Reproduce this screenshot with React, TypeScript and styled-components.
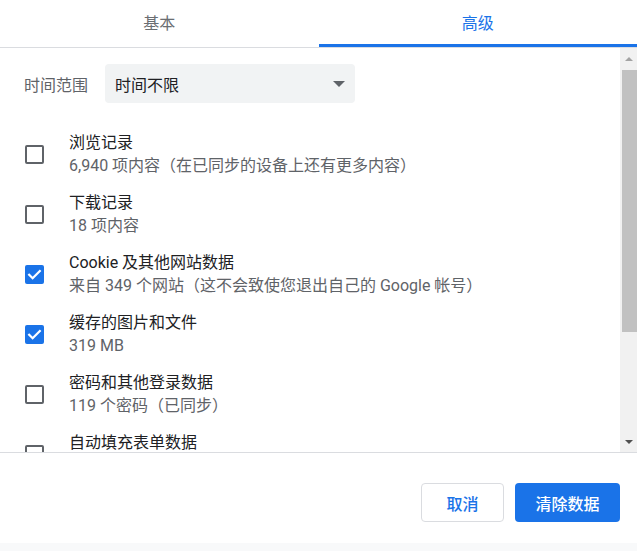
import React from 'react';
import styled, { createGlobalStyle } from 'styled-components';

const GlobalStyle = createGlobalStyle`
  * {
    box-sizing: border-box;
  }

  body {
    margin: 0;
    background: #ffffff;
    font-family: Roboto, 'Noto Sans CJK SC', sans-serif;
  }
`;

type Item = {
  title: string;
  detail: string;
  checked: boolean;
};

const items: Item[] = [
  { title: '浏览记录', detail: '6,940 项内容（在已同步的设备上还有更多内容）', checked: false },
  { title: '下载记录', detail: '18 项内容', checked: false },
  { title: 'Cookie 及其他网站数据', detail: '来自 349 个网站（这不会致使您退出自己的 Google 帐号）', checked: true },
  { title: '缓存的图片和文件', detail: '319 MB', checked: true },
  { title: '密码和其他登录数据', detail: '119 个密码（已同步）', checked: false },
  { title: '自动填充表单数据', detail: '', checked: false },
];

const App = () => {
  return (
    <Root>
      <GlobalStyle />
      <TabBar>
        <Tab>基本</Tab>
        <Tab active>高级</Tab>
      </TabBar>
      <Body>
        <Content>
          <RangeRow>
            <RangeLabel>时间范围</RangeLabel>
            <Select>
              <span>时间不限</span>
              <SelectArrow />
            </Select>
          </RangeRow>
          <List>
            {items.map((item) => (
              <Row key={item.title}>
                <Checkbox checked={item.checked}>
                  {item.checked && (
                    <svg width="15" height="15" viewBox="0 0 24 24">
                      <path d="M3.5 12.5l5.5 5.5L20.5 6.5" fill="none" stroke="#ffffff" strokeWidth="3.6" strokeLinecap="square" />
                    </svg>
                  )}
                </Checkbox>
                <RowText>
                  <RowTitle>{item.title}</RowTitle>
                  <RowDetail>{item.detail}</RowDetail>
                </RowText>
              </Row>
            ))}
          </List>
        </Content>
        <ScrollTrack>
          <ScrollButton>
            <ArrowUp />
          </ScrollButton>
          <Thumb />
          <ScrollGap />
          <ScrollButton>
            <ArrowDown />
          </ScrollButton>
        </ScrollTrack>
      </Body>
      <Footer>
        <CancelButton>取消</CancelButton>
        <ClearButton>清除数据</ClearButton>
      </Footer>
      <BottomStrip />
    </Root>
  );
};

const Root = styled.div`
  width: 637px;
  height: 551px;

  display: flex;
  flex-direction: column;

  background: #ffffff;
  overflow: hidden;
`;

const TabBar = styled.div`
  height: 48px;

  display: flex;

  border-bottom: 1px solid #dadce0;
`;

const Tab = styled.div<{ active?: boolean }>`
  flex: 1;
  height: 47px;

  display: flex;
  align-items: center;
  justify-content: center;

  font-size: 16px;
  color: ${({ active }) => (active ? '#1a73e8' : '#6b6e72')};
  border-bottom: 3px solid ${({ active }) => (active ? '#1a73e8' : 'transparent')};
`;

const Body = styled.div`
  height: 405px;

  display: flex;

  border-bottom: 1px solid #dadce0;
`;

const Content = styled.div`
  flex: 1;
  min-width: 0;

  padding: 16px 0 0 24px;
  overflow: hidden;
`;

const RangeRow = styled.div`
  display: flex;
  align-items: center;
  gap: 17px;
`;

const RangeLabel = styled.span`
  width: 64px;

  font-size: 16px;
  color: #5f6368;
`;

const Select = styled.div`
  width: 250px;
  height: 39px;

  display: flex;
  align-items: center;
  justify-content: space-between;

  padding: 0 10px;
  border-radius: 4px;
  background: #f1f3f4;

  font-size: 16px;
  color: #202124;
`;

const SelectArrow = styled.span`
  width: 0;
  height: 0;

  border-left: 6px solid transparent;
  border-right: 6px solid transparent;
  border-top: 6px solid #5f6368;
`;

const List = styled.div`
  display: flex;
  flex-direction: column;

  margin-top: 21px;
`;

const Row = styled.div`
  height: 60px;
  flex-shrink: 0;

  display: flex;
  align-items: center;
  gap: 25px;

  padding-left: 1px;
`;

const Checkbox = styled.span<{ checked: boolean }>`
  width: 19px;
  height: 19px;
  flex-shrink: 0;

  display: flex;
  align-items: center;
  justify-content: center;

  border-radius: 2px;
  border: ${({ checked }) => (checked ? 'none' : '2px solid #5f6368')};
  background: ${({ checked }) => (checked ? '#1a73e8' : 'transparent')};
`;

const RowText = styled.div`
  display: flex;
  flex-direction: column;
`;

const RowTitle = styled.div`
  font-size: 16px;
  line-height: 23px;
  color: #202124;
  white-space: nowrap;
`;

const RowDetail = styled.div`
  min-height: 23px;

  font-size: 16px;
  line-height: 23px;
  color: #5f6368;
  white-space: nowrap;
`;

const ScrollTrack = styled.div`
  width: 17px;

  display: flex;
  flex-direction: column;

  background: #f1f1f1;
`;

const ScrollButton = styled.div`
  height: 21px;

  display: flex;
  align-items: center;
  justify-content: center;
`;

const ArrowUp = styled.span`
  width: 0;
  height: 0;

  border-left: 4px solid transparent;
  border-right: 4px solid transparent;
  border-bottom: 4px solid #a3a3a3;
`;

const ArrowDown = styled.span`
  width: 0;
  height: 0;

  border-left: 4px solid transparent;
  border-right: 4px solid transparent;
  border-top: 4px solid #505050;
`;

const Thumb = styled.div`
  height: 262px;

  margin: 1px 0 0 2px;
  background: #c1c1c1;
`;

const ScrollGap = styled.div`
  flex: 1;
`;

const Footer = styled.div`
  height: 90px;

  display: flex;
  justify-content: flex-end;
  align-items: flex-start;
  gap: 11px;

  padding: 30px 17px 0 0;
`;

const CancelButton = styled.button`
  height: 39px;
  min-width: 83px;

  padding: 0 20px;
  border-radius: 4px;
  border: 1px solid #dadce0;
  background: #ffffff;

  font-family: Roboto, 'Noto Sans CJK SC', sans-serif;
  font-size: 16px;
  font-weight: 500;
  color: #1a73e8;
`;

const ClearButton = styled.button`
  height: 39px;
  width: 105px;

  padding: 0;
  border-radius: 4px;
  border: none;
  background: #1a73e8;

  font-family: Roboto, 'Noto Sans CJK SC', sans-serif;
  font-size: 16px;
  font-weight: 500;
  color: #ffffff;
`;

const BottomStrip = styled.div`
  flex: 1;

  background: #f8f9fa;
`;

export default App;
